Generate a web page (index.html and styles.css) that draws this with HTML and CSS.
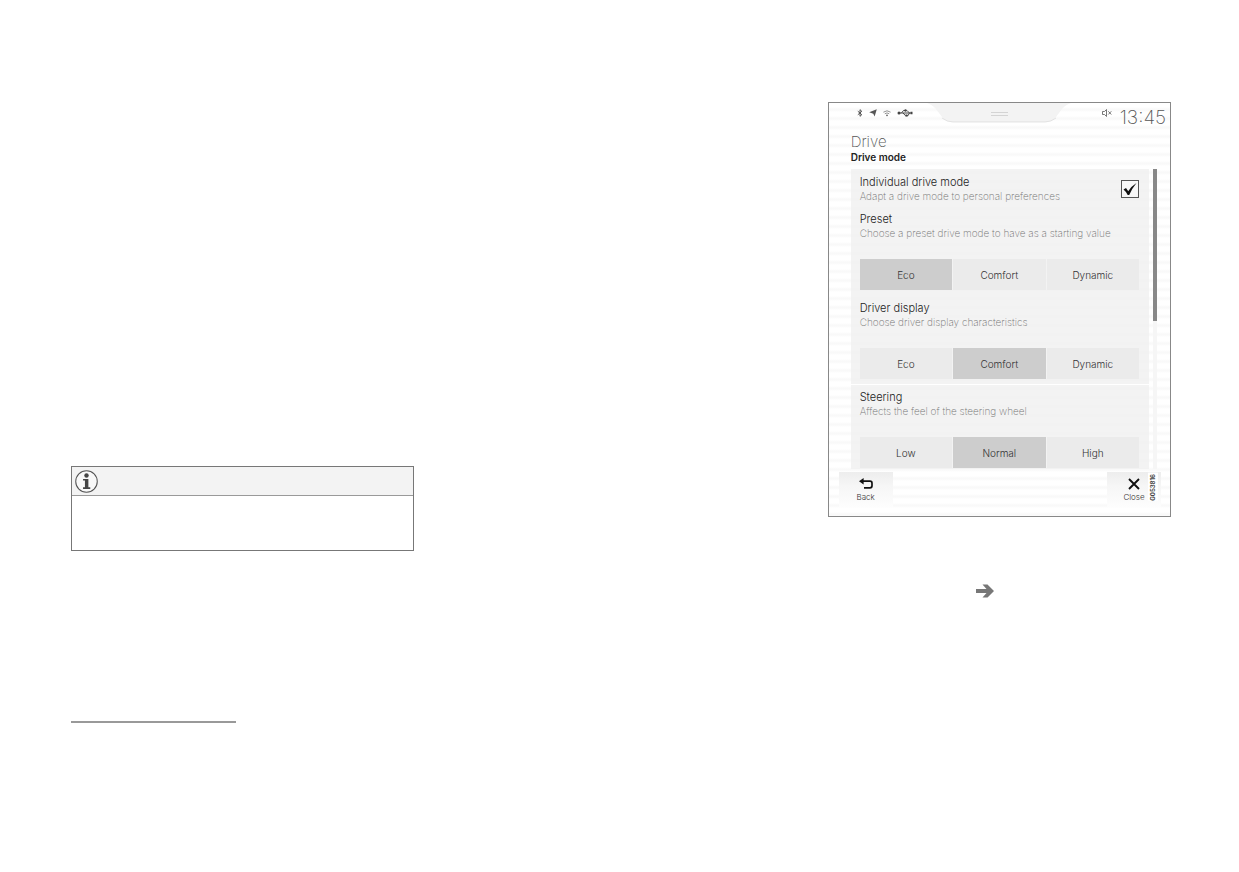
FILE: index.html
```html
<!DOCTYPE html>
<html lang="en">
	<head>
		<meta charset="utf-8">
		<title>Drive mode</title>
		<link rel="stylesheet" href="styles.css">
	</head>
	<body>
		<div class="page">
			<div class="column">
				<div class="note">
					<div class="note-header">
						<svg class="info-icon" viewBox="0 0 22 22" role="img" aria-label="Note">
							<circle cx="11" cy="11" r="10.3" fill="#f8f8f8" stroke="#555" stroke-width="1"/>
							<circle cx="11" cy="5.2" r="2.1" fill="#444"/>
							<path d="M7.700 8.600h5.100v8h1.800v1.500H7.700v-1.500h1.800v-6.500H7.700z" fill="#444"/>
						</svg>
					</div>
					<div class="note-body"></div>
				</div>
				<hr class="footnote-rule">
			</div>
			<div class="column"></div>
			<div class="column">
				<div class="screen">
					<div class="status-bar">
						<div class="status-icons">
							<svg class="bluetooth" viewBox="0 0 6 8"><path d="M.8 2.2l4 3.500L3 7.300V.7l1.800 1.600-4 3.500" fill="none" stroke="#444" stroke-width=".9"/></svg>
							<svg class="location" viewBox="0 0 8 8"><path d="M7.800.2L5.600 7.600 4.300 4.800.2 3.300z" fill="#555"/></svg>
							<svg class="wifi" viewBox="0 0 8 8"><path d="M.4 3.200Q4 .4 7.600 3.200M1.800 4.800Q4 3 6.200 4.800" fill="none" stroke="#777" stroke-width=".8"/><circle cx="4" cy="6.400" r=".8" fill="#555"/></svg>
							<svg class="usb" viewBox="0 0 16 8"><path d="M2 4h12M4.500 4l2-2.500h3M6 4l2.500 2.700h2.500l1.500-2.700L10 1.500" fill="none" stroke="#444" stroke-width="1"/><circle cx="2" cy="4" r="1.500" fill="#444"/><circle cx="8.500" cy="1.500" r="1.200" fill="#444"/><path d="M8.500 5.600h2v2h-2zM13.500 2.700h2v2.600h-2z" fill="#444"/></svg>
						</div>
						<svg class="pull-tab" viewBox="0 0 144 20">
							<path d="M0 0h144c-5 2-8 4-12 10-4 6-8 9-14 9H26c-6 0-10-3-14-9C8 4 5 2 0 0z" fill="#f3f3f3"/>
							<path d="M15 15q5 4 11 4h92q6 0 11-4" fill="none" stroke="#d8d8d8" stroke-width=".7"/>
							<path d="M64 9.500h17M64 12.500h17" stroke="#d4d4d4" stroke-width="1"/>
						</svg>
						<div class="clock">
							<svg class="mute" viewBox="0 0 10 8"><path d="M.5 2.500h2l2-2v7l-2-2h-2zM6.300 2.300l3 3.200M9.300 2.300l-3 3.200" fill="none" stroke="#555" stroke-width=".8"/></svg>
							<span class="time">13:45</span>
						</div>
					</div>
					<div class="heading">
						<h1>Drive</h1>
						<h2>Drive mode</h2>
					</div>
					<div class="settings">
						<div class="list">
							<div class="setting check-setting">
								<label for="individual">Individual drive mode</label>
								<p>Adapt a drive mode to personal preferences</p>
								<input type="checkbox" id="individual" checked>
							</div>
							<div class="setting">
								<h3>Preset</h3>
								<p>Choose a preset drive mode to have as a starting value</p>
								<div class="segments">
									<button type="button" class="selected">Eco</button>
									<button type="button">Comfort</button>
									<button type="button">Dynamic</button>
								</div>
							</div>
							<div class="setting">
								<h3>Driver display</h3>
								<p>Choose driver display characteristics</p>
								<div class="segments">
									<button type="button">Eco</button>
									<button type="button" class="selected">Comfort</button>
									<button type="button">Dynamic</button>
								</div>
							</div>
							<div class="setting divided">
								<h3>Steering</h3>
								<p>Affects the feel of the steering wheel</p>
								<div class="segments">
									<button type="button">Low</button>
									<button type="button" class="selected">Normal</button>
									<button type="button">High</button>
								</div>
							</div>
						</div>
						<div class="scrollbar"><div class="thumb"></div></div>
					</div>
					<div class="footer">
						<button type="button">
							<svg viewBox="0 0 14 12"><path d="M3 3.200h8q2 0 2 2v2.600q0 2-2 2H5" fill="none" stroke="#111" stroke-width="1.700"/><path d="M0 3.200L4.600 0v6.400z" fill="#111"/></svg>
							Back
						</button>
						<button type="button">
							<svg viewBox="0 0 14 12"><path d="M2 1l10 10M12 1L2 11" stroke="#111" stroke-width="1.900"/></svg>
							Close
						</button>
						<span class="figure-id">G053816</span>
					</div>
				</div>
				<svg class="arrow" viewBox="0 0 18 14"><path d="M0 5h10.500L6.500.5h5L18 7l-6.500 6.500h-5l4-4.500H0z" fill="#777"/></svg>
			</div>
		</div>
	</body>
</html>
```

FILE: styles.css
```css
* {
	margin: 0;
	padding: 0;
	box-sizing: border-box;
}
body {
	background-color: #fff;
	font-family: Inter, "Liberation Sans", sans-serif;
	color: #333;
}
svg {
	display: block;
}
button {
	border: none;
	font-family: inherit;
	color: #333;
	cursor: pointer;
}
.page {
	display: grid;
	grid-template-columns: repeat(3, 1fr);
	gap: 35px;
	padding: 102px 68px 102px 71px;
}

/* note box */
.note {
	margin-top: 364px;
	border: 1px solid #777;
}
.note-header {
	height: 29px;
	padding: 3px;
	background-color: #f3f3f3;
	border-bottom: 1px solid #999;
}
.info-icon {
	width: 23px;
	height: 23px;
}
.note-body {
	height: 54px;
}
.footnote-rule {
	width: 48%;
	margin-top: 170px;
	border: none;
	border-top: 2px solid #999;
}

/* center display */
.screen {
	border: 1px solid #888;
	background: repeating-linear-gradient(#fff 0, #fff 4px, #f9f9f9 6px, #f9f9f9 7px, #fff 9px);
}
.status-bar {
	display: grid;
	grid-template-columns: 1fr 144px 1fr;
	height: 31px;
}
.status-icons {
	display: flex;
	align-items: center;
	gap: 6px;
	height: 20px;
	padding-left: 28px;
}
.bluetooth {
	width: 6px;
	height: 8px;
}
.location, .wifi {
	width: 8px;
	height: 8px;
}
.usb {
	width: 16px;
	height: 8px;
}
.pull-tab {
	width: 144px;
	height: 20px;
}
.clock {
	display: flex;
	justify-content: flex-end;
	gap: 8px;
	padding-right: 4px;
}
.mute {
	width: 10px;
	height: 8px;
	margin-top: 6px;
}
.time {
	font-size: 19px;
	font-weight: 200;
	line-height: 29px;
	color: #555;
}
.heading {
	padding-left: 22px;
	height: 35px;
}
.heading h1 {
	font-size: 15px;
	font-weight: 200;
	line-height: 16px;
	color: #555;
}
.heading h2 {
	font-size: 10px;
	font-weight: 600;
	line-height: 14px;
	color: #222;
}
.settings {
	display: flex;
	gap: 4px;
	padding: 0 13px 0 22px;
}
.list {
	flex: 1;
	background-color: rgba(240, 240, 240, .8);
}
.setting {
	padding: 5px 10px 5px 9px;
	border-top: 1px solid transparent;
}
.divided {
	border-top-color: #fff;
	padding-bottom: 1px;
}
.check-setting {
	display: grid;
	grid-template-columns: 1fr 18px;
	padding-bottom: 3px;
}
.check-setting input {
	grid-area: 1 / 2 / 3 / 3;
	align-self: center;
	appearance: none;
	width: 18px;
	height: 18px;
	border: 1px solid #555;
	background: url("data:image/svg+xml,%3Csvg xmlns='http://www.w3.org/2000/svg' viewBox='0 0 16 16'%3E%3Cpath d='M1.500 8.500L4 7l2.200 3.300Q9.500 5 14.500 2 10 7.500 7.200 14H5.700Q4.500 11 1.500 8.500z' fill='%23111'/%3E%3C/svg%3E") #f8f8f8;
}
.setting h3, .setting label {
	font-size: 11px;
	font-weight: 300;
	line-height: 14px;
	color: #222;
}
.setting p {
	font-size: 10px;
	font-weight: 200;
	line-height: 14px;
	white-space: nowrap;
	color: #777;
}
.segments {
	display: grid;
	grid-template-columns: repeat(3, 1fr);
	gap: 1px;
	margin-top: 19px;
}
.segments button {
	height: 31px;
	font-size: 10px;
	font-weight: 300;
	background-color: #ebebeb;
}
.segments .selected {
	background-color: #cdcdcd;
}
.scrollbar {
	width: 4px;
	background-color: #f6f6f6;
}
.thumb {
	height: 152px;
	background-color: #888;
}
.footer {
	position: relative;
	display: flex;
	justify-content: space-between;
	padding: 3px 9px 9px 10px;
}
.footer button {
	width: 54px;
	height: 35px;
	font-size: 8px;
	font-weight: 300;
	line-height: 12px;
	background: linear-gradient(#ededed, #f6f6f6 40%, #fdfdfd);
}
.footer svg {
	width: 14px;
	height: 12px;
	margin: 2px auto 1px;
}
/* printed over the close button */
.figure-id {
	position: absolute;
	top: 4px;
	right: 12px;
	padding-bottom: 1px;
	writing-mode: vertical-rl;
	transform: rotate(180deg);
	font-size: 6px;
	font-weight: 700;
	line-height: 10px;
	color: #444;
	background-color: #fff;
}
.arrow {
	width: 18px;
	height: 14px;
	margin: 67px auto 0 148px;
}
```
